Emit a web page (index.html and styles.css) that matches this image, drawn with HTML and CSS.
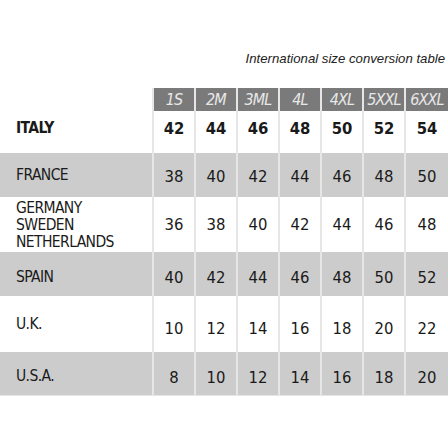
FILE: index.html
```html
<!DOCTYPE html>
<html>
<head>
<meta charset="utf-8">
<link rel="stylesheet" href="styles.css">
</head>
<body>
<div class="page">
  <div class="title">International size conversion table</div>
  <div class="table">
    <div class="row head">
      <div class="label"></div>
      <div class="cell">1S</div><div class="cell">2M</div><div class="cell">3ML</div><div class="cell">4L</div><div class="cell">4XL</div><div class="cell">5XXL</div><div class="cell">6XXL</div>
    </div>
    <div class="row italy bold">
      <div class="label">ITALY</div>
      <div class="cell">42</div><div class="cell">44</div><div class="cell">46</div><div class="cell">48</div><div class="cell">50</div><div class="cell">52</div><div class="cell">54</div>
    </div>
    <div class="row france shade">
      <div class="label">FRANCE</div>
      <div class="cell">38</div><div class="cell">40</div><div class="cell">42</div><div class="cell">44</div><div class="cell">46</div><div class="cell">48</div><div class="cell">50</div>
    </div>
    <div class="row germany">
      <div class="label">GERMANY<br>SWEDEN<br>NETHERLANDS</div>
      <div class="cell">36</div><div class="cell">38</div><div class="cell">40</div><div class="cell">42</div><div class="cell">44</div><div class="cell">46</div><div class="cell">48</div>
    </div>
    <div class="row spain shade">
      <div class="label">SPAIN</div>
      <div class="cell">40</div><div class="cell">42</div><div class="cell">44</div><div class="cell">46</div><div class="cell">48</div><div class="cell">50</div><div class="cell">52</div>
    </div>
    <div class="row uk">
      <div class="label">U.K.</div>
      <div class="cell">10</div><div class="cell">12</div><div class="cell">14</div><div class="cell">16</div><div class="cell">18</div><div class="cell">20</div><div class="cell">22</div>
    </div>
    <div class="row usa shade">
      <div class="label">U.S.A.</div>
      <div class="cell">8</div><div class="cell">10</div><div class="cell">12</div><div class="cell">14</div><div class="cell">16</div><div class="cell">18</div><div class="cell">20</div>
    </div>
  </div>
</div>
</body>
</html>
```
FILE: styles.css
```css
html, body {
  margin: 0;
  padding: 0;
  background: #ffffff;
}
.page {
  width: 448px;
  height: 448px;
  padding-top: 51px;
  box-sizing: border-box;
}
.title {
  font-family: "Liberation Sans", Arial, sans-serif;
  font-style: italic;
  font-size: 13.2px;
  line-height: 16px;
  color: #222;
  text-align: right;
  padding-right: 3px;
  height: 37px;
}
.table {
  font-family: "DejaVu Sans Condensed", "Liberation Sans", sans-serif;
  font-stretch: condensed;
  color: #1a1a1a;
}
.row {
  display: grid;
  grid-template-columns: 152px repeat(6, 40px) 42px;
  column-gap: 2px;
  background: #e6e6e6;
}
.label, .cell { box-sizing: border-box; }
.label {
  background: #fff;
  display: flex;
  align-items: center;
  padding-left: 16px;
  font-size: 15.5px;
  letter-spacing: -0.6px;
  line-height: 17px;
}
.cell {
  background: #fff;
  display: flex;
  align-items: center;
  justify-content: center;
  font-size: 16.5px;
}
.head { height: 23px; }
.head .cell {
  background: #7a7a7a;
  color: #e8e8e8;
  font-style: italic;
  font-size: 16px;
  letter-spacing: -0.9px;
}
.bold .label, .bold .cell { font-weight: bold; }
.italy { height: 42px; }
.italy .label, .italy .cell { padding-bottom: 8px; }
.shade .label, .shade .cell { background: #cccccc; }
.france { height: 44px; }
.france .cell { padding-top: 2px; }
.germany { height: 55px; }
.germany .label { padding-top: 1px; }
.spain { height: 44px; }
.spain .label, .spain .cell { padding-top: 6px; }
.uk { height: 56px; }
.uk .label { padding-bottom: 0; }
.uk .cell { padding-top: 8px; }
.usa { height: 43px; border-bottom: 1px solid #e6e6e6; }
.usa .label { padding-top: 6px; }
.usa .cell { padding-top: 8px; }
```
